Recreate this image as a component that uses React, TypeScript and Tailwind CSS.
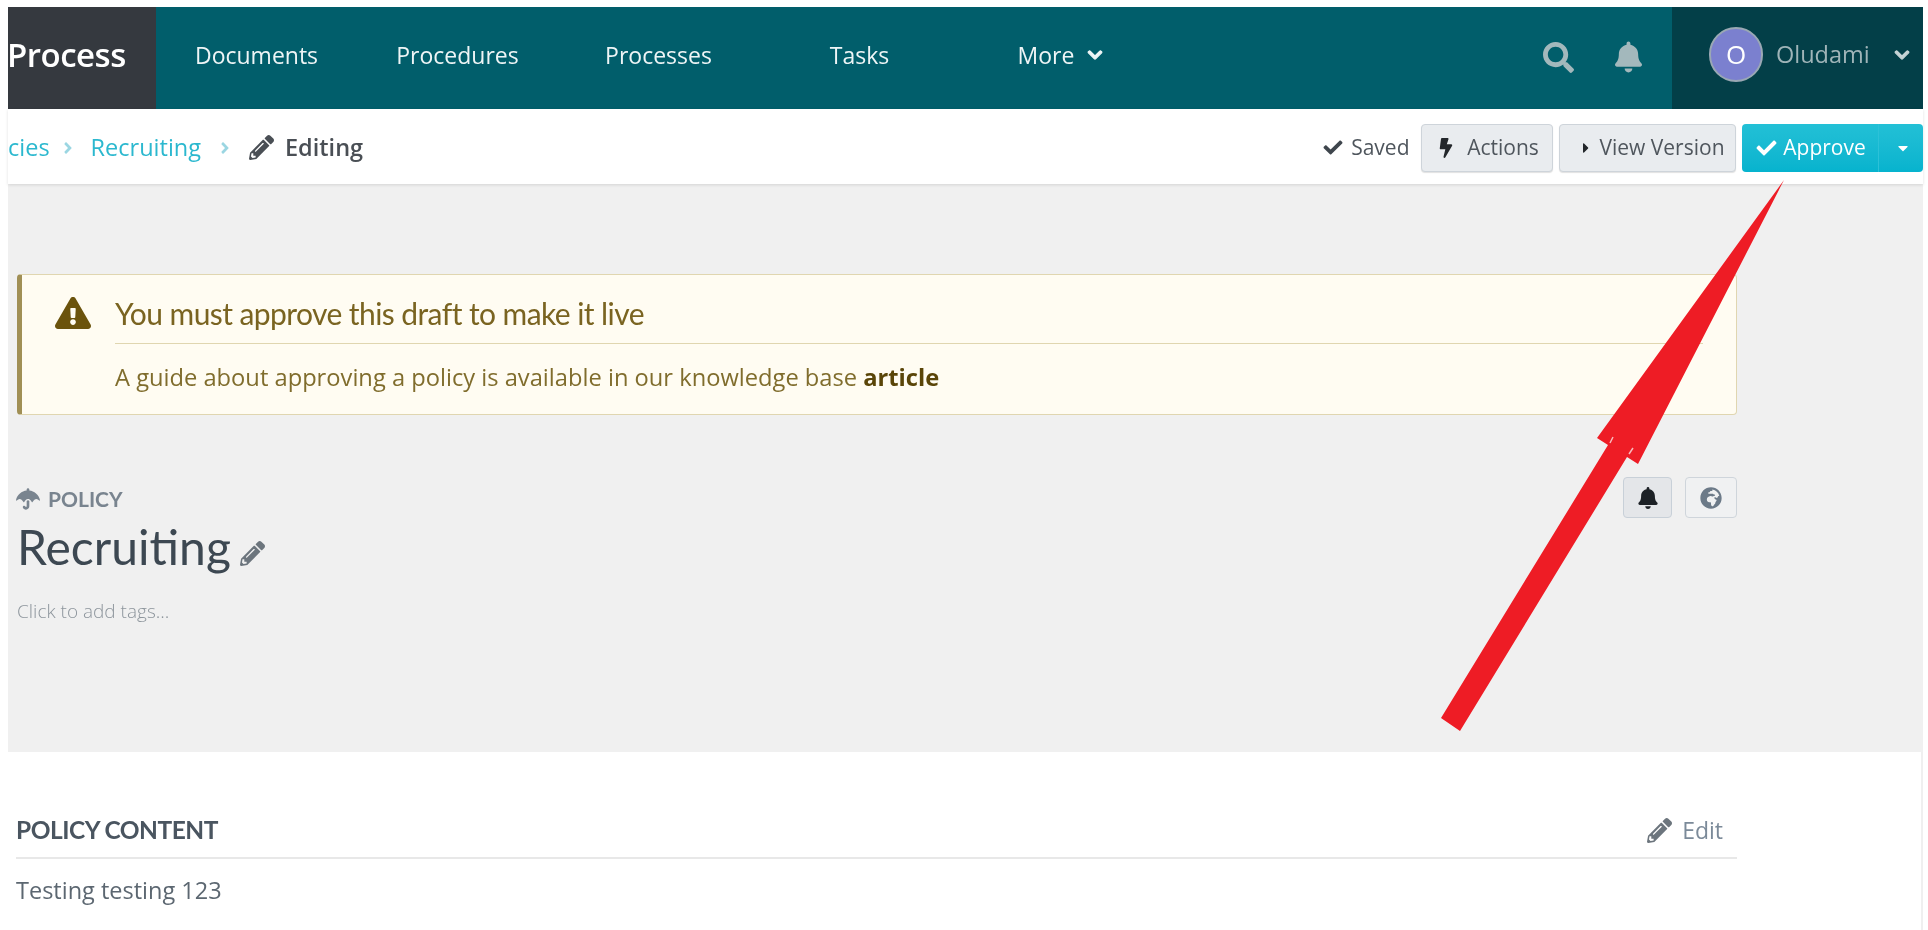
import React from "react";
import {
  FaSearch, FaBell, FaChevronDown, FaCheck, FaBolt, FaCaretRight, FaCaretDown,
  FaPencilAlt, FaExclamationTriangle, FaUmbrella, FaGlobeAfrica, FaAngleRight,
} from "react-icons/fa";

const open = "font-['Open_Sans',sans-serif]";
const lato = "font-['Lato',sans-serif]";

function NavItem({ label, chevron }: { label: string; chevron?: boolean }) {
  return (
    <div className="w-[201px] flex items-center justify-center gap-[13px] text-[23px] text-[#eef5f6]">
      <span>{label}</span>
      {chevron && <FaChevronDown className="w-[16px] h-[16px] stroke-[40]" />}
    </div>
  );
}

export default function App() {
  return (
    <div className={`relative w-[1928px] h-[930px] overflow-hidden bg-white pt-[7px] blur-[0.4px] ${open}`}>
      <header className="ml-[8px] mr-[5px] h-[102px] flex bg-[#015e6b]">
        <div className="w-[148px] shrink-0 bg-[#35393f] flex items-center overflow-hidden">
          <span className="text-[33px] font-semibold text-white tracking-[-0.5px] -ml-[1px] -translate-y-[3px]">Process</span>
        </div>
        <nav className="flex -translate-y-[3px]">
          <NavItem label="Documents" />
          <NavItem label="Procedures" />
          <NavItem label="Processes" />
          <NavItem label="Tasks" />
          <NavItem label="More" chevron />
        </nav>
        <div className="ml-auto flex items-center gap-[41px] pr-[30px] text-[#a3b8bc] -translate-y-[1px]">
          <FaSearch className="w-[31px] h-[31px]" />
          <FaBell className="w-[27px] h-[32px]" />
        </div>
        <div className="w-[251px] shrink-0 bg-[#033f48] flex items-center pl-[37px] pb-[7px]">
          <div className="w-[54px] h-[55px] rounded-full bg-[#7b80cf] border-[2px] border-[#9aa8b4] flex items-center justify-center text-white text-[26px]">
            O
          </div>
          <span className="ml-[13px] text-[23.5px] text-[#9fb4b8]">Oludami</span>
          <FaChevronDown className="ml-[24px] w-[16px] h-[16px] stroke-[40] text-[#c5d3d5]" />
        </div>
      </header>

      <div className="relative z-10 h-[75px] ml-[8px] mr-[5px] pt-[2px] flex items-center bg-white shadow-[0_1px_3px_rgba(0,0,0,0.12)] text-[23.5px]">
        <span className="text-[#2bb8cf]">cies</span>
        <FaAngleRight className="ml-[11px] mr-[16px] w-[14px] h-[18px] text-[#9bd6e2]" />
        <span className="text-[#2bb8cf]">Recruiting</span>
        <FaAngleRight className="ml-[17px] mr-[13px] w-[14px] h-[18px] text-[#9bd6e2]" />
        <FaPencilAlt className="ml-[4px] w-[25px] h-[25px] text-[#4a4f55]" />
        <span className="ml-[11px] font-semibold text-[#4a4f55]">Editing</span>

        <div className="ml-auto flex items-center h-[48px] text-[21px] text-[#4f565d]">
          <FaCheck className="w-[24px] h-[19px] text-[#3f464d]" />
          <span className="ml-[6px] mr-[11px]">Saved</span>
          <button className="h-full w-[132px] pl-[4px] flex items-center justify-center gap-[13px] rounded-[4px] bg-[#e9ecef] border border-[#ced4da] shadow-[0_1px_1px_rgba(0,0,0,0.12)]">
            <FaBolt className="w-[16px] h-[20px] text-[#23272b]" />
            <span>Actions</span>
          </button>
          <button className="ml-[6px] h-full w-[177px] pl-[12px] flex items-center justify-center gap-[8px] rounded-[4px] bg-[#e9ecef] border border-[#ced4da] shadow-[0_1px_1px_rgba(0,0,0,0.12)]">
            <FaCaretRight className="w-[10px] h-[16px] text-[#23272b]" />
            <span>View Version</span>
          </button>
          <div className="ml-[6.5px] h-full w-[181px] flex rounded-[4px] bg-linear-to-b from-[#22c0d6] to-[#06b3ce] text-white">
            <div className="w-[136px] flex items-center justify-center gap-[4px]">
              <FaCheck className="w-[25px] h-[20px]" />
              <span>Approve</span>
            </div>
            <div className="flex-1 pl-[4px] flex items-center justify-center border-l border-[#2cc1d8]">
              <FaCaretDown className="w-[16px] h-[16px]" />
            </div>
          </div>
        </div>
      </div>

      <section className="ml-[8px] mr-[5px] h-[568px] bg-[#f0f0f0] pt-[90px] pl-[9px] pr-[186px]">
        <div className="h-[141px] flex bg-[#fffcf2] rounded-[4px] border border-[#e0d6b0] border-l-[5px] border-l-[#a08f55] pl-[33px] pr-[33px]">
          <FaExclamationTriangle className="mt-[22px] w-[36px] h-[32px] shrink-0 text-[#6b530c]" />
          <div className="ml-[24px] flex-1">
            <div className={`h-[69px] pt-[18px] text-[30px] leading-[40px] tracking-[-0.58px] text-[#7a6421] border-b border-[#e0d6b0] ${lato}`}>
              You must approve this draft to make it live
            </div>
            <div className="mt-[18px] text-[23.7px] leading-[30px] text-[#806d2d]">
              A guide about approving a policy is available in our knowledge base{" "}
              <b className="font-bold text-[#5a4508]">article</b>
            </div>
          </div>
        </div>

        <div className="mt-[72px] flex justify-between">
          <div>
            <div className={`flex items-center gap-[8px] h-[24px] text-[21px] font-bold text-[#79848f] ${lato}`}>
              <FaUmbrella className="w-[24px] h-[22px] -ml-[1px]" />
              <span>POLICY</span>
            </div>
            <div className="flex items-center mt-[4px]">
              <span className={`text-[48px] leading-[64px] text-[#3d4852] ${lato}`}>Recruiting</span>
              <FaPencilAlt className="ml-[9px] mt-[13px] w-[25px] h-[25px] text-[#6c757d]" />
            </div>
            <div className="mt-[20px] text-[19px] leading-[24px] font-light text-[#8d959c]">Click to add tags...</div>
          </div>
          <div className="flex gap-[13px] -mt-[10px]">
            <button className="w-[49px] h-[41px] flex items-center justify-center rounded-[4px] bg-[#e4e6e9] border-[1.5px] border-[#c8d0d8]">
              <FaBell className="w-[20px] h-[22px] text-[#1c2126]" />
            </button>
            <button className="w-[52px] h-[41px] flex items-center justify-center rounded-[4px] bg-[#f0f1f2] border-[1.5px] border-[#cfd5db]">
              <FaGlobeAfrica className="w-[22px] h-[22px] text-[#6c7a88]" />
            </button>
          </div>
        </div>
      </section>

      <section className="mr-[5px] h-[178px] border-r-[2px] border-[#efefef] pl-[16px] pr-[184px] pt-[60px]">
        <div className="h-[47px] flex items-center justify-between border-b-[2px] border-[#e8e8e8] pb-[8px]">
          <span className={`text-[24.5px] font-bold tracking-[-0.5px] text-[#4a5560] ${lato}`}>POLICY CONTENT</span>
          <div className="flex items-center gap-[10px] pr-[14px] text-[#7b8a99] text-[23px]">
            <FaPencilAlt className="w-[25px] h-[25px] text-[#6c757d]" />
            <span>Edit</span>
          </div>
        </div>
        <div className="mt-[16px] text-[23.5px] leading-[30px] text-[#5c6771]">Testing testing 123</div>
      </section>

      <svg className="absolute inset-0 z-20 pointer-events-none" width="1928" height="930" viewBox="0 0 1928 930">
        <polygon
          fill="#ee1c25"
          points="1784,180 1638,464 1627,457 1460,731 1441,718 1608,445 1597,438"
        />
        <path d="M1613 437 L1610 443 M1633 448 L1629 454" stroke="#f7b9bc" strokeWidth="1.5" />
      </svg>
    </div>
  );
}
